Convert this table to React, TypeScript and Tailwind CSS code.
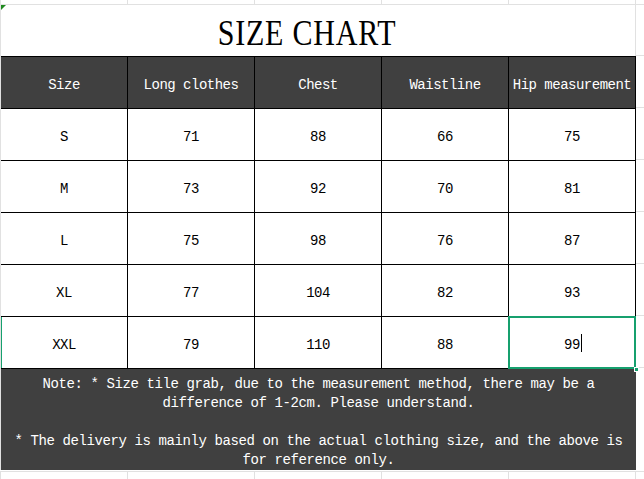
const cols = ["Size", "Long clothes", "Chest", "Waistline", "Hip measurement"];

const rows = [
  ["S", "71", "88", "66", "75"],
  ["M", "73", "92", "70", "81"],
  ["L", "75", "98", "76", "87"],
  ["XL", "77", "104", "82", "93"],
  ["XXL", "79", "110", "88", "99"],
];

const mono = "font-['Liberation_Mono',monospace]";

function GridStrip({ h, top }: { h: string; top?: boolean }) {
  return (
    <div className={`flex ${h} ${top ? "border-t border-[#e1e1e1]" : ""}`}>
      {[0, 1, 2, 3, 4].map((i) => (
        <div
          key={i}
          className={`${i === 0 ? "w-[128px] border-l" : "w-[127px]"} border-r border-[#e1e1e1] shrink-0`}
        />
      ))}
      <div className="flex-1" />
    </div>
  );
}

export default function App() {
  return (
    <div className="w-[644px] h-[479px] bg-white overflow-hidden flex flex-col">
      <div className="h-[5px] border-b border-[#e1e1e1] flex">
        <GridStrip h="h-[4px] w-full" />
      </div>
      <div className="flex">
        <div className="w-[636px] shrink-0 border-l border-[#e1e1e1]">
          {/* title */}
          <div className="relative h-[51px] border-r border-[#e1e1e1] flex items-center justify-center">
            <div className="absolute left-0 top-0 w-0 h-0 border-t-[5px] border-r-[5px] border-t-[#1f8a1f] border-r-transparent" />
            <span className="font-['Liberation_Serif',serif] text-[30px] tracking-[0.8px] text-black leading-none scale-y-120 pt-[4px] mr-[22px]">
              SIZE CHART
            </span>
          </div>
          {/* header */}
          <div className={`grid grid-cols-[127px_127px_127px_127px_127px] bg-[#404040] border-t border-b border-black ${mono}`}>
            {cols.map((c) => (
              <div
                key={c}
                className="h-[51px] border-r border-black flex items-center justify-center pt-[5px] text-white text-[14px] tracking-[-0.5px] whitespace-nowrap"
              >
                {c}
              </div>
            ))}
          </div>
          {/* body */}
          {rows.map((r, ri) => (
            <div key={ri} className={`grid grid-cols-[127px_127px_127px_127px_127px] border-b border-black ${mono}`}>
              {r.map((v, ci) => {
                const sel = ri === 4 && ci === 4;
                return (
                  <div
                    key={ci}
                    className={`relative h-[51px] border-r border-black flex items-center justify-center pt-[5px] text-black text-[14px] tracking-[-0.5px] ${
                      ri === 4 && ci === 0 ? "shadow-[inset_1px_0_0_#16a06e]" : ""
                    }`}
                  >
                    <span className="relative">
                      {v}
                      {sel && <span className="absolute -right-[2px] top-[-1px] w-px h-[18px] bg-black" />}
                    </span>
                    {sel && (
                      <>
                        <div className="absolute -left-[1px] -top-[1px] -right-[1px] -bottom-[1px] border-2 border-[#16a06e] pointer-events-none" />
                        <div className="absolute -right-[4px] -bottom-[4px] w-[5px] h-[5px] bg-[#16a06e] border border-white" />
                      </>
                    )}
                  </div>
                );
              })}
            </div>
          ))}
          {/* note */}
          <div
            className={`bg-[#404040] h-[101px] w-[635px] text-white text-[14px] tracking-[-0.4px] leading-[19px] text-center pt-[6px] ${mono}`}
          >
            <p className="px-[4px]">
              Note: * Size tile grab, due to the measurement method, there may be a difference of 1-2cm. Please understand.
            </p>
            <p className="mt-[19px] px-[2px]">
              * The delivery is mainly based on the actual clothing size, and the above is for reference only.
            </p>
          </div>
        </div>
        <div className="flex-1 flex flex-col">
          <div className="h-[51px] border-b border-[#e1e1e1]" />
          {[0, 1, 2, 3, 4, 5].map((i) => (
            <div key={i} className="h-[52px] border-b border-[#e1e1e1]" />
          ))}
        </div>
      </div>
      <div className="h-[2px]" />
      <GridStrip h="h-[10px] w-full" top />
    </div>
  );
}
